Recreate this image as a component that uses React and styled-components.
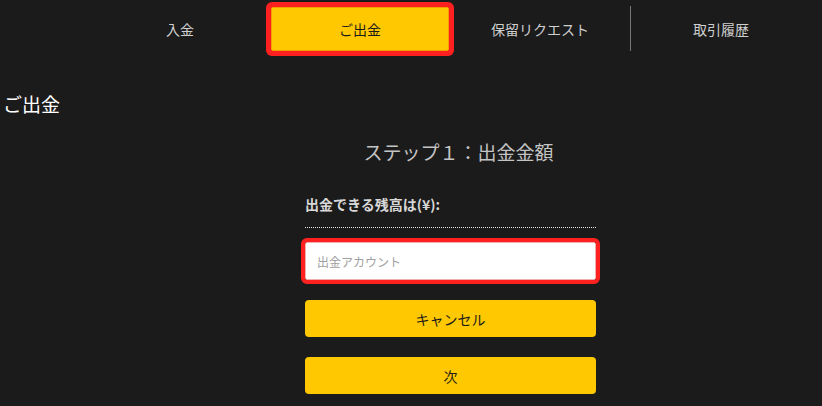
import React from 'react';
import styled, { createGlobalStyle } from 'styled-components';

const Global = createGlobalStyle`
  html, body {
    margin: 0;
    padding: 0;
    background: #1b1b1b;
    font-family: "Noto Sans CJK JP", "Noto Sans", sans-serif;
  }
`;

const Page = styled.div`
  width: 822px;
  height: 406px;
  overflow: hidden;
  background: #1b1b1b;
`;

const Nav = styled.nav`
  display: flex;
  align-items: stretch;
  height: 58px;
  padding-left: 90px;
`;

const Tab = styled.div`
  width: ${({ active }) => (active ? '178px' : '180px')};
  display: flex;
  align-items: center;
  justify-content: center;
  font-size: 14px;
  color: ${({ active }) => (active ? '#1b1b1b' : '#cfcfcf')};
  background: ${({ active }) => (active ? '#ffc800' : 'transparent')};
  margin: ${({ active }) => (active ? '7px 1px 7px 1px' : '0')};
  border: ${({ active }) => (active ? '1px solid #f0a000' : 'none')};
  box-shadow: ${({ active }) => (active ? '0 0 0 5px #ff2020' : 'none')};
  border-radius: 2px;
  box-sizing: border-box;
`;

const Divider = styled.div`
  width: 1px;
  background: #777;
  margin: 6px 0 7px;
`;

const Heading = styled.h2`
  margin: 33px 0 0 3px;
  font-size: 19px;
  font-weight: normal;
  color: #ffffff;
  line-height: 26px;
`;

const Form = styled.div`
  width: 291px;
  margin: 21px 0 0 305px;
`;

const Step = styled.div`
  text-align: center;
  padding-left: 16px;
  font-size: 19px;
  color: #c4c4c4;
  line-height: 28px;
`;

const Balance = styled.div`
  margin-top: 28px;
  font-size: 14px;
  font-weight: bold;
  color: #d8d8d8;
  line-height: 20px;
  padding-bottom: 13px;
  border-bottom: 1px dotted #e8e8e8;
`;

const Input = styled.input`
  display: block;
  box-sizing: border-box;
  width: 291px;
  height: 38px;
  margin-top: 14px;
  padding: 0 11px;
  border: 1px solid #f0b0b0;
  background: #fff;
  outline: 4px solid #ff2020;
  border-radius: 2px;
  font-family: inherit;
  font-size: 12px;
  &::placeholder {
    color: #a0a0a0;
  }
`;

const Button = styled.button`
  display: block;
  width: 291px;
  height: 37px;
  margin-top: ${({ gap }) => gap}px;
  border: none;
  border-radius: 4px;
  background: #ffc800;
  color: #1b1b1b;
  font-family: inherit;
  font-size: 14px;
`;

export default function App() {
  return (
    <Page>
      <Global />
      <Nav>
        <Tab>入金</Tab>
        <Tab active>ご出金</Tab>
        <Tab>保留リクエスト</Tab>
        <Divider />
        <Tab>取引履歴</Tab>
      </Nav>
      <Heading>ご出金</Heading>
      <Form>
        <Step>ステップ１：出金金額</Step>
        <Balance>出金できる残高は(¥):</Balance>
        <Input placeholder="出金アカウント" />
        <Button gap={20}>キャンセル</Button>
        <Button gap={20}>次</Button>
      </Form>
    </Page>
  );
}
